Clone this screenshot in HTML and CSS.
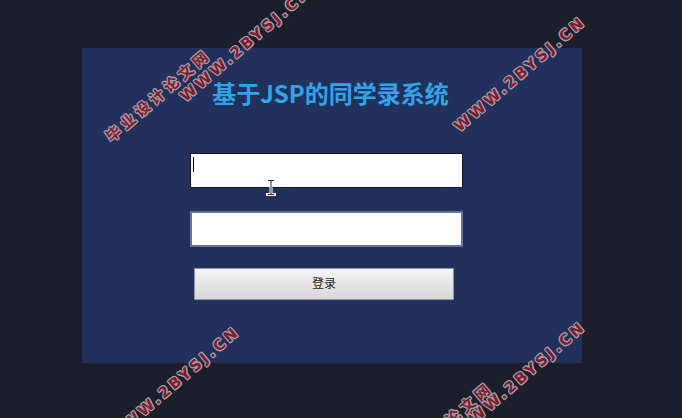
FILE: index.html
```html
<!DOCTYPE html>
<html lang="zh-CN">
<head>
<meta charset="utf-8">
<title>基于JSP的同学录系统</title>
<link rel="stylesheet" href="styles.css">
</head>
<body>
<div class="page">
  <form class="panel">
    <h1 class="title">基于JSP的同学录系统</h1>
    <div class="field">
      <input class="input input-active" type="text" name="username">
      <span class="caret"></span>
    </div>
    <input class="input input-idle" type="password" name="password">
    <button class="btn" type="button">登录</button>
  </form>

  <svg class="ibeam" width="10" height="17" viewBox="0 0 10 17">
    <path d="M1.5 1.5h7M5 1.5v14M1.5 15.5h7" stroke="#ffffff" stroke-width="3" fill="none" stroke-linecap="square"/>
    <path d="M2 1.5h6M5 1.5v14M2 15.5h6" stroke="#2a2a2a" stroke-width="1" fill="none"/>
  </svg>

  <div class="marks">
    <span class="mark cn" style="left:158px;top:95px">毕业设计论文网</span>
    <span class="mark en" style="left:246px;top:44px">WWW.2BYSJ.CN</span>
    <span class="mark en" style="left:520px;top:74px">WWW.2BYSJ.CN</span>
    <span class="mark en" style="left:174px;top:384px">WWW.2BYSJ.CN</span>
    <span class="mark en" style="left:520px;top:379px">WWW.2BYSJ.CN</span>
    <span class="mark cn" style="left:440px;top:428px">毕业设计论文网</span>
  </div>
</div>
</body>
</html>
```

FILE: styles.css
```css
html, body {
  margin: 0;
  padding: 0;
}

body {
  background: #1b1e2b;
  font-family: "Liberation Sans", "Noto Sans CJK SC", sans-serif;
  width: 682px;
  height: 418px;
  overflow: hidden;
}

.page {
  position: relative;
  width: 682px;
  height: 418px;
  padding: 48px 0 0 82px;
  box-sizing: border-box;
}

.panel {
  width: 500px;
  height: 315px;
  background: #22315b;
  box-sizing: border-box;
  padding-top: 29px;
  margin: 0;
  display: flex;
  flex-direction: column;
  align-items: flex-start;
}

.title {
  align-self: stretch;
  margin: 0 0 44px 0;
  text-align: center;
  font-family: "Noto Sans CJK SC", "Liberation Sans", sans-serif;
  font-size: 24px;
  line-height: 32px;
  font-weight: 700;
  color: #2fa4e8;
  padding-right: 3px;
}

.field {
  position: relative;
  margin-left: 108px;
}

.input {
  display: block;
  width: 273px;
  box-sizing: border-box;
  background: #ffffff;
  margin: 0;
  padding: 0 4px;
  outline: none;
  font-size: 14px;
}

.input-active {
  height: 35px;
  border: 1px solid #12172a;
}

.input-idle {
  height: 36px;
  margin-left: 108px;
  margin-top: 23px;
  border: 2px solid #66769a;
}

.caret {
  position: absolute;
  left: 3px;
  top: 4px;
  width: 1px;
  height: 15px;
  background: #000000;
}

.btn {
  margin: 21px 0 0 112px;
  width: 260px;
  height: 32px;
  box-sizing: border-box;
  border: 1px solid #8d96ab;
  background: linear-gradient(#f4f4f4, #e6e6e6 50%, #d6d6d6);
  font-family: "Noto Sans CJK SC", sans-serif;
  font-size: 12px;
  line-height: 28px;
  color: #1e1e1e;
  padding: 0 0 2px 0;
}

.ibeam {
  position: absolute;
  left: 266px;
  top: 179px;
}

.marks {
  position: absolute;
  inset: 0;
  pointer-events: none;
  overflow: hidden;
}

.mark {
  position: absolute;
  white-space: nowrap;
  transform: translate(-50%, -50%) rotate(-40.6deg);
  font-weight: 700;
  line-height: 16px;
  color: #7e1b2c;
  text-shadow:
    1px 0 0 #a99ea8,
    -1px 0 0 #a99ea8,
    0 1px 0 #a99ea8,
    0 -1px 0 #a99ea8,
    1px 1px 0 #a99ea8,
    -1px -1px 0 #a99ea8,
    1px -1px 0 #a99ea8,
    -1px 1px 0 #a99ea8;
}

.mark.en {
  font-family: "DejaVu Sans", sans-serif;
  font-size: 15px;
  letter-spacing: 3px;
}

.mark.cn {
  font-family: "Noto Sans CJK SC", sans-serif;
  font-size: 15px;
  letter-spacing: 4px;
}
```
